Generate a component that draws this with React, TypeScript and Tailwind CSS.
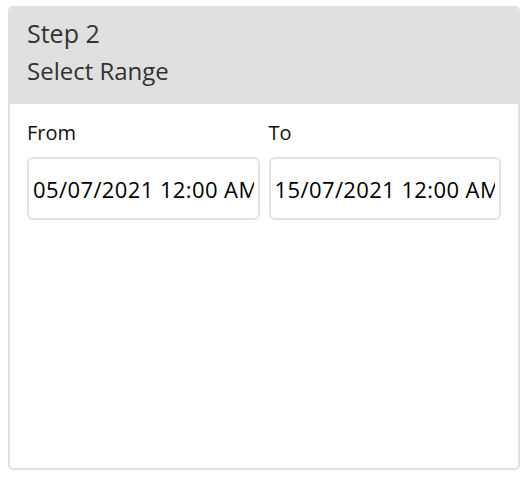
import { useState } from "react";

const DateField = ({ label, value }: { label: string; value: string }) => {
  const [val, setVal] = useState(value);
  return (
    <div className="flex flex-col">
      <label className="text-[20px] leading-[28px] text-[#111] mb-[10px]">{label}</label>
      <input
        type="text"
        value={val}
        onChange={(e) => setVal(e.target.value)}
        className="h-[63px] w-full rounded-[6px] border-2 border-[#e3e3e3] px-[4px] text-[22px] tracking-[0.4px] text-black outline-none"
      />
    </div>
  );
};

export default function App() {
  return (
    <div className="bg-white w-[528px] h-[478px] pt-[6px] px-[8px]" style={{ fontFamily: "'Open Sans', 'Noto Sans', sans-serif" }}>
      <div className="h-[464px] rounded-[5px] border-2 border-[#e0e0e0] overflow-hidden flex flex-col">
        <div className="bg-[#e0e0e0] h-[96px] px-[17px] pt-[9px]">
          <div className="text-[25px] leading-[32px] text-[#333]">Step 2</div>
          <div className="text-[24px] leading-[32px] mt-[6px] text-[#333]">Select Range</div>
        </div>
        <div className="grid grid-cols-2 gap-[9px] px-[17px] pt-[15px]">
          <DateField label="From" value="05/07/2021 12:00 AM" />
          <DateField label="To" value="15/07/2021 12:00 AM" />
        </div>
      </div>
    </div>
  );
}
